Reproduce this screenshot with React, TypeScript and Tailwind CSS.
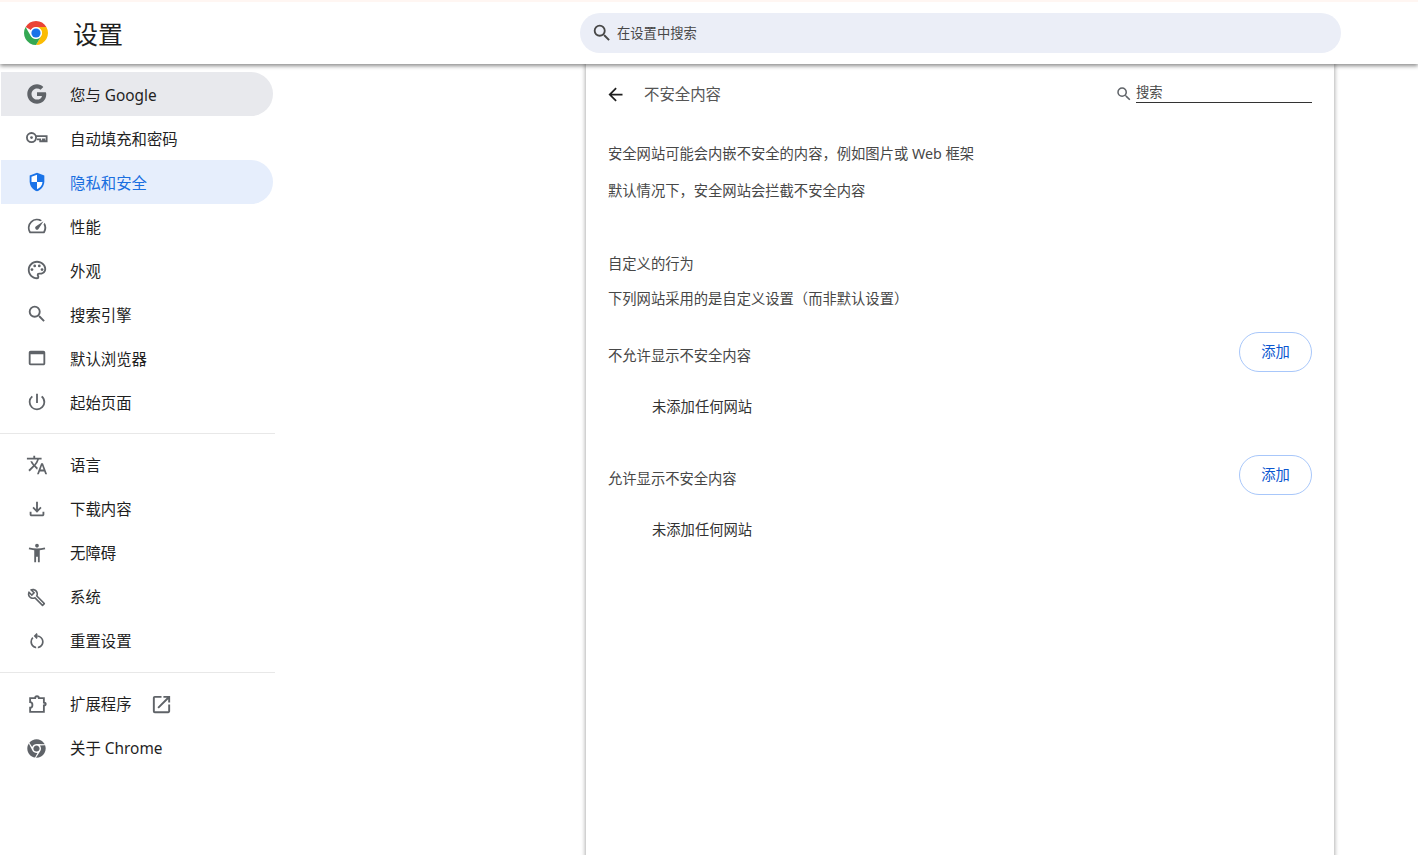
import { FaChrome } from 'react-icons/fa';
import {
  MdAccessibilityNew,
  MdArrowBack,
  MdOpenInNew,
  MdOutlineBuild,
  MdOutlineFileDownload,
  MdOutlinePalette,
  MdOutlineRestartAlt,
  MdOutlineSpeed,
  MdOutlineWebAsset,
  MdPowerSettingsNew,
  MdSearch,
  MdTranslate,
} from 'react-icons/md';

function ChromeLogo() {
  return (
    <svg viewBox="0 0 24 24" className="w-6 h-6">
      <path fill="#ea4335" d="M12 0A12 12 0 0 1 22.39 6H12A6 6 0 0 0 6.8 9L1.61 6A12 12 0 0 1 12 0Z" />
      <path fill="#fbbc04" d="M22.39 6A12 12 0 0 1 12 24L17.2 15A6 6 0 0 0 12 6H22.39Z" />
      <path fill="#34a853" d="M1.61 6L6.8 15A6 6 0 0 0 17.2 15L12 24A12 12 0 0 1 1.61 6Z" />
      <circle cx="12" cy="12" r="5.8" fill="#fff" />
      <circle cx="12" cy="12" r="4.6" fill="#1a73e8" />
    </svg>
  );
}

function GoogleG() {
  return (
    <svg viewBox="0 0 24 24" className="w-[22px] h-[22px]">
      <path
        fill="#5f6368"
        d="M21.6 10H12v4.1h5.5c-.5 2.6-2.7 4-5.5 4-3.3 0-6-2.8-6-6.100s2.700-6.100 6-6.100c1.500 0 2.800.5 3.900 1.400l3-3C17 2.400 14.700 1.400 12 1.400 6.100 1.400 1.400 6.100 1.400 12S6.100 22.600 12 22.600c5.300 0 10.100-3.800 10.100-10.600 0-.7-.2-1.400-.5-2Z"
      />
    </svg>
  );
}

function KeyIcon() {
  return (
    <svg viewBox="0 0 24 24" className="w-[22px] h-[22px]" fill="none" stroke="#5f6368" strokeWidth="2">
      <circle cx="6" cy="11.500" r="5" />
      <circle cx="6" cy="11.500" r="1.500" fill="#5f6368" stroke="none" />
      <path d="M11 10h11.500v5.500h-2.500v-2h-1.500v2h-3v-2h-3.500" strokeWidth="2" />
    </svg>
  );
}

function ShieldIcon() {
  return (
    <svg viewBox="0 0 24 24" className="w-[22px] h-[22px]">
      <path fill="#1a73e8" d="M12 2 4 5v6.100c0 5 3.400 9.700 8 10.900 4.600-1.200 8-5.900 8-10.900V5l-8-3Z" />
      <path fill="#fff" d="M12 4.200 6 6.400V12h6V4.200ZM12 12v7.800c3.300-1 5.700-4.200 6-7.800h-6Z" />
    </svg>
  );
}

function PuzzleIcon() {
  return (
    <svg viewBox="0 0 24 24" className="w-[22px] h-[22px]" fill="none" stroke="#5f6368" strokeWidth="2">
      <path d="M4.500 5.500H10C10 4.200 10.800 3.500 12 3.500S14 4.200 14 5.500H19.500V10.500C21 10.500 21.500 11.200 21.500 12S21 13.500 19.500 13.500V20.500H4.500V16C6 16 7 14.500 7 13S6 10 4.500 10V5.500Z" />
    </svg>
  );
}

function SideItem({
  icon,
  label,
  className,
  labelClass,
  children,
}: {
  icon: React.ReactNode;
  label: string;
  className?: string;
  labelClass?: string;
  children?: React.ReactNode;
}) {
  return (
    <div className={`flex items-center h-11 w-[272px] rounded-r-[22px] text-[#1f1f1f] ${className ?? ''}`}>
      <span className="w-[69px] flex justify-center pl-[2px] text-[#5f6368] text-[22px]">{icon}</span>
      <span className={labelClass ?? 'pt-[2px]'}>{label}</span>
      {children}
    </div>
  );
}

function SiteSection({ title }: { title: string }) {
  return (
    <>
      <div className="flex items-center justify-between h-10">
        <span className="pt-[8px]">{title}</span>
        <button className="w-[73px] h-10 rounded-full border border-[#a8c7fa] text-[#0b57d0] text-[14.3px] bg-white">
          添加
        </button>
      </div>
      <div className="pl-[44px] mt-[24px] h-[22px] leading-[22px] text-[#333]">未添加任何网站</div>
    </>
  );
}

export default function App() {
  return (
    <div className="h-[855px] overflow-hidden bg-white text-[15.4px] font-['Noto_Sans','Noto_Sans_CJK_SC',sans-serif]">
      {/* Toolbar */}
      <header className="relative z-10 h-16 flex items-center bg-white border-t-2 border-[#fff6f2] shadow-[0_2px_4px_rgba(0,0,0,0.45)]">
        <div className="w-[580px] flex items-center pl-6">
          <ChromeLogo />
          <span className="ml-[25px] pt-[3px] text-[25px] text-[#1f1f1f]">设置</span>
        </div>
        <div className="w-[761px] h-10 rounded-full bg-[#ebeef7] flex items-center pl-[11px] text-[13.3px] text-[#474747]">
          <MdSearch className="text-[#474747] text-[22px]" />
          <span className="ml-[4px] pt-[2px]">在设置中搜索</span>
        </div>
      </header>

      <div className="flex">
        {/* Sidebar */}
        <nav className="w-[275px] shrink-0 pt-2">
          <div className="pl-px">
            <SideItem icon={<GoogleG />} label="您与 Google" labelClass="pt-[4px]" className="bg-[#e8e9ed]" />
            <SideItem icon={<KeyIcon />} label="自动填充和密码" labelClass="pt-[4px]" />
            <SideItem icon={<ShieldIcon />} label="隐私和安全" labelClass="pt-[4px]" className="bg-[#e6eefc] !text-[#1a6fe0]" />
            <SideItem icon={<MdOutlineSpeed />} label="性能" labelClass="pt-[4px]" />
            <SideItem icon={<MdOutlinePalette />} label="外观" labelClass="pt-[4px]" />
            <SideItem icon={<MdSearch />} label="搜索引擎" labelClass="pt-[4px]" />
            <SideItem icon={<MdOutlineWebAsset />} label="默认浏览器" labelClass="pt-[4px]" />
            <SideItem icon={<MdPowerSettingsNew />} label="起始页面" labelClass="pt-[4px]" />
          </div>
          <div className="my-[9px] h-px bg-[#e8e8e8]" />
          <div className="pl-px">
            <SideItem icon={<MdTranslate />} label="语言" />
            <SideItem icon={<MdOutlineFileDownload />} label="下载内容" />
            <SideItem icon={<MdAccessibilityNew />} label="无障碍" />
            <SideItem icon={<MdOutlineBuild className="text-[19px]" />} label="系统" />
            <SideItem icon={<MdOutlineRestartAlt className="text-[20px]" />} label="重置设置" />
          </div>
          <div className="my-[9px] h-px bg-[#e8e8e8]" />
          <div className="pl-px">
            <SideItem icon={<PuzzleIcon />} label="扩展程序">
              <MdOpenInNew className="ml-[18px] text-[#5f6368] text-[23px]" />
            </SideItem>
            <SideItem icon={<FaChrome className="text-[19px]" />} label="关于 Chrome" />
          </div>
        </nav>

        {/* Content card */}
        <main className="ml-[311px] w-[748px] h-[800px] bg-white shadow-[0_0_4px_1px_rgba(0,0,0,0.3)] pl-[22px] pr-[22px] text-[14.3px] text-[#474747]">
          <div className="flex items-center h-[60px]">
            <MdArrowBack className="-ml-[3px] text-[21px] text-[#1f1f1f]" />
            <span className="ml-[18px] pt-[2px] text-[15.4px] text-[#555]">不安全内容</span>
            <div className="ml-auto flex items-center">
              <MdSearch className="text-[18px] text-[#5f6368]" />
              <div className="ml-[3px] w-[176px] border-b border-[#333] text-[13.3px] leading-[15px] h-[18px]">搜索</div>
            </div>
          </div>
          <p className="mt-[19px] leading-[22px]">安全网站可能会内嵌不安全的内容，例如图片或 Web 框架</p>
          <p className="mt-[15px] leading-[22px]">默认情况下，安全网站会拦截不安全内容</p>
          <p className="mt-[51px] leading-[22px]">自定义的行为</p>
          <p className="mt-[13px] leading-[22px]">下列网站采用的是自定义设置（而非默认设置）</p>
          <div className="mt-[22px]">
            <SiteSection title="不允许显示不安全内容" />
          </div>
          <div className="mt-[37px]">
            <SiteSection title="允许显示不安全内容" />
          </div>
        </main>
      </div>
    </div>
  );
}
